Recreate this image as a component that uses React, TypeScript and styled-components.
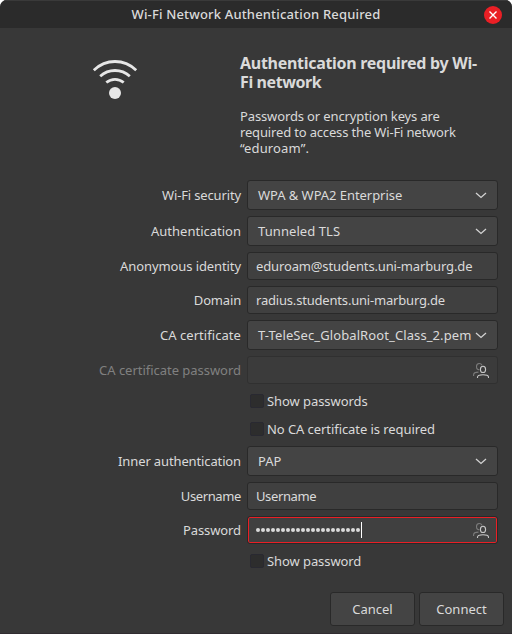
import React from "react";
import styled, { createGlobalStyle } from "styled-components";

const GlobalStyle = createGlobalStyle`
  * { box-sizing: border-box; }
  body { margin: 0; background: #fff; }
`;

const Dialog = styled.main`
  width: 512px;
  height: 634px;
  display: flex;
  flex-direction: column;
  overflow: hidden;
  border-radius: 7px 7px 0 0;
  border-bottom: 1px solid #302c30;
  background: #383838;
  color: #dadada;
  font: 13px/16px "Noto Sans", "Open Sans", sans-serif;
`;

const TitleBar = styled.header`
  height: 28px;
  flex: none;
  display: grid;
  grid-template-columns: 28px 1fr 28px;
  align-items: center;
  padding: 0 5px;
  background: #2b2b2b;
  border-top: 1px solid #3a3a3a;
`;

const Title = styled.h1`
  grid-column: 2;
  margin: 0;
  padding-bottom: 1px;
  text-align: center;
  font-size: 13px;
  line-height: 18px;
  font-weight: 500;
`;

const CloseButton = styled.button`
  width: 18px;
  height: 18px;
  margin-left: 5px;
  padding: 0;
  border: 0;
  border-radius: 50%;
  display: grid;
  place-items: center;
  background: #ea1f25;
`;

const Intro = styled.section`
  height: 152px;
  flex: none;
  display: grid;
  grid-template-columns: 230px 1fr;
  padding-left: 10px;
`;

const IconCell = styled.div`
  padding: 27px 0 0 81px;
`;

const IntroText = styled.div`
  padding-top: 26px;
  white-space: nowrap;
`;

const Heading = styled.h2`
  margin: 0;
  font-size: 16px;
  line-height: 19px;
  font-weight: 700;
`;

const Message = styled.p`
  margin: 16px 0 0;
`;

const Track = styled.span<{ $s?: number }>`
  letter-spacing: ${({ $s = 0 }) => $s}px;
  white-space: nowrap;
`;

const Form = styled.form`
  display: flex;
  flex-direction: column;
  gap: 6px;
  padding-right: 14px;
`;

const Row = styled.div<{ $disabled?: boolean }>`
  display: grid;
  grid-template-columns: 241px 251px;
  column-gap: 6px;
  align-items: center;
  color: ${({ $disabled }) => ($disabled ? "#808080" : "#dadada")};
`;

const Label = styled.label`
  text-align: right;
`;

const Combo = styled.div`
  height: 30px;
  display: flex;
  align-items: center;
  justify-content: space-between;
  padding: 0 10px;
  border: 1px solid #292929;
  border-radius: 3px;
  background: #444;
`;

const Entry = styled.div<{ $disabled?: boolean; $focused?: boolean }>`
  height: 28px;
  display: flex;
  align-items: center;
  padding: 0 8px;
  border: 1px solid ${({ $disabled }) => ($disabled ? "#303030" : "#292929")};
  border-radius: 3px;
  background: ${({ $disabled }) => ($disabled ? "#3b3b3b" : "#404040")};
  box-shadow: ${({ $focused }) => ($focused ? "inset 0 0 0 1px #ea1f25" : "none")};
`;

const EntryIcon = styled.span`
  display: flex;
  margin-left: auto;
`;

const Dots = styled.span`
  display: flex;
  gap: 1px;
`;

const Dot = styled.i`
  width: 4px;
  height: 4px;
  border-radius: 50%;
  background: #dadada;
`;

const Caret = styled.i`
  width: 1px;
  height: 16px;
  margin-left: 1px;
  background: #fff;
`;

const CheckRow = styled.label`
  height: 22px;
  margin-left: 250px;
  display: flex;
  align-items: center;
  gap: 3px;
`;

const CheckBox = styled.span`
  width: 14px;
  height: 14px;
  border: 1px solid #292931;
  border-radius: 2px;
  background: #2d2d2d;
`;

const Actions = styled.footer`
  margin-top: auto;
  display: flex;
  justify-content: flex-end;
  gap: 4px;
  padding: 0 8px 7px;
`;

const ActionButton = styled.button`
  width: 85px;
  height: 34px;
  padding: 0;
  border: 1px solid #292929;
  border-radius: 3px;
  background: #444;
  color: inherit;
  font: inherit;
`;

const WifiIcon = () => (
  <svg width="48" height="48" viewBox="0 0 48 48" fill="none" stroke="#e6e6e6" strokeWidth="2.8">
    <path d="M2.8 15.2Q12 6.5 24 6.5T45.2 15.2" />
    <path d="M9.2 21.3Q15.5 15.5 24 15.5T38.8 21.3" />
    <path d="M15.3 27.5Q19.2 24.3 24 24.3T32.7 27.5" />
    <circle cx="24" cy="38" r="6" fill="#e6e6e6" stroke="none" />
  </svg>
);

const Chevron = () => (
  <svg width="12" height="8" viewBox="0 0 12 8" fill="none" stroke="#d2d2d2" strokeWidth="1.3">
    <path d="M1 2L6 6.5L11 2" />
  </svg>
);

const UsersIcon = () => (
  <svg width="16" height="16" viewBox="0 0 16 16" fill="none" strokeWidth="1.1">
    <g stroke="#7c7c7c">
      <path d="M9 3.2C8.5 2.1 7.5 1.5 6.2 1.5 4.4 1.5 3.5 2.8 3.5 4.6 3.5 6.5 4.6 7.9 6.3 7.9" />
      <path d="M.6 13.9V12.8C.6 11 2.2 10.1 5.5 10.1" />
    </g>
    <g stroke="#c8c8c8">
      <ellipse cx="10" cy="7.4" rx="2.6" ry="3.1" />
      <path d="M4.5 16V15.2C4.5 13.4 6.4 12.8 10 12.8S15.5 13.4 15.5 15.2V16" />
    </g>
  </svg>
);

function ComboRow({ label, value, ls, vs }: { label: string; value: string; ls?: number; vs?: number }) {
  return (
    <Row>
      <Label><Track $s={ls}>{label}</Track></Label>
      <Combo><Track $s={vs}>{value}</Track><Chevron /></Combo>
    </Row>
  );
}

function EntryRow({ label, value, ls, vs }: { label: string; value: string; ls?: number; vs?: number }) {
  return (
    <Row>
      <Label><Track $s={ls}>{label}</Track></Label>
      <Entry><Track $s={vs}>{value}</Track></Entry>
    </Row>
  );
}

function Check({ text, s }: { text: string; s?: number }) {
  return <CheckRow><CheckBox /><Track $s={s}>{text}</Track></CheckRow>;
}

export default function App() {
  return (
    <>
      <GlobalStyle />
      <Dialog>
        <TitleBar>
          <Title><Track $s={0.17}>Wi-Fi Network Authentication Required</Track></Title>
          <CloseButton aria-label="Close">
            <svg width="8" height="8" viewBox="0 0 8 8" stroke="#fff" strokeWidth="1.4"><path d="M.5.5L7.5 7.5M7.5.5L.5 7.5" /></svg>
          </CloseButton>
        </TitleBar>
        <Intro>
          <IconCell><WifiIcon /></IconCell>
          <IntroText>
            <Heading><Track $s={-0.29}>Authentication required by Wi-</Track><br /><Track $s={-0.4}>Fi network</Track></Heading>
            <Message>
              <Track $s={-0.13}>Passwords or encryption keys are</Track><br />
              <Track $s={-0.16}>required to access the Wi-Fi network</Track><br />
              <Track $s={0.15}>“eduroam”.</Track>
            </Message>
          </IntroText>
        </Intro>
        <Form>
          <ComboRow label="Wi-Fi security" ls={-0.14} value="WPA & WPA2 Enterprise" vs={-0.05} />
          <ComboRow label="Authentication" value="Tunneled TLS" vs={0.08} />
          <EntryRow label="Anonymous identity" ls={-0.09} value="eduroam@students.uni-marburg.de" vs={-0.14} />
          <EntryRow label="Domain" ls={-0.17} value="radius.students.uni-marburg.de" vs={-0.19} />
          <ComboRow label="CA certificate" ls={0.06} value="T-TeleSec_GlobalRoot_Class_2.pem" vs={0.1} />
          <Row $disabled>
            <Label><Track $s={-0.03}>CA certificate password</Track></Label>
            <Entry $disabled><EntryIcon><UsersIcon /></EntryIcon></Entry>
          </Row>
          <Check text="Show passwords" s={-0.07} />
          <Check text="No CA certificate is required" s={-0.07} />
          <ComboRow label="Inner authentication" ls={-0.13} value="PAP" />
          <EntryRow label="Username" ls={-0.38} value="Username" vs={-0.38} />
          <Row>
            <Label><Track $s={-0.1}>Password</Track></Label>
            <Entry $focused>
              <Dots>{Array.from({ length: 21 }, (_, i) => <Dot key={i} />)}</Dots>
              <Caret />
              <EntryIcon><UsersIcon /></EntryIcon>
            </Entry>
          </Row>
          <Check text="Show password" s={-0.08} />
        </Form>
        <Actions>
          <ActionButton><Track>Cancel</Track></ActionButton>
          <ActionButton><Track>Connect</Track></ActionButton>
        </Actions>
      </Dialog>
    </>
  );
}
